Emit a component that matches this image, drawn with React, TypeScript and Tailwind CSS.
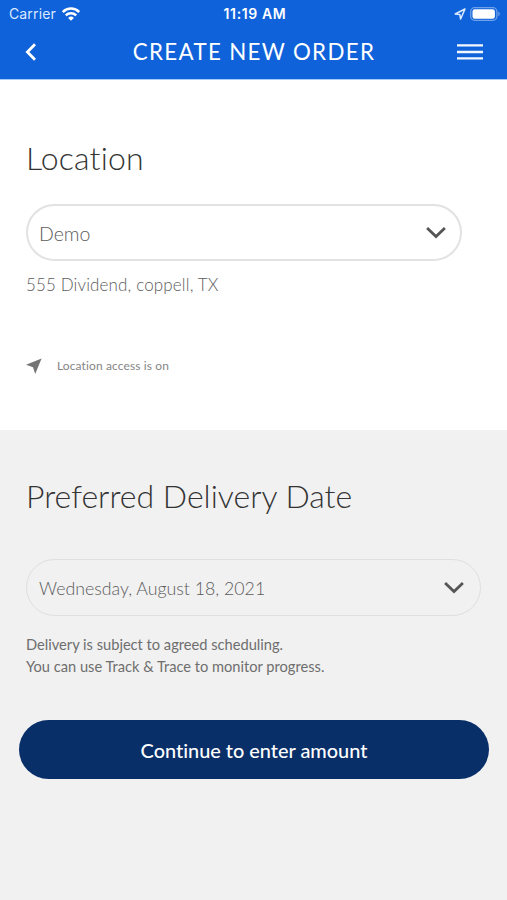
import * as React from 'react'

function WifiIcon() {
  return (
    <svg width="18" height="14" viewBox="0 0 18 14" fill="none" stroke="#fff" strokeWidth="2.5">
      <path d="M.8 5a11.6 11.6 0 0 1 16.4 0" />
      <path d="M3.8 8.4a7.4 7.4 0 0 1 10.4 0" />
      <path d="M9 13.8 6.1 10.9a4.1 4.1 0 0 1 5.8 0Z" fill="#fff" stroke="none" />
    </svg>
  )
}

function LocationOutlineIcon() {
  return (
    <svg width="12" height="12" viewBox="0 0 12 12" fill="none" stroke="#dcebff" strokeWidth="1.5" strokeLinejoin="round">
      <path d="M11 1 1.2 6l4.6.5.8 4.5Z" />
    </svg>
  )
}

function BatteryIcon() {
  return (
    <svg width="31" height="14" viewBox="0 0 31 14">
      <rect x="0.7" y="0.7" width="26.2" height="12.6" rx="4" fill="none" stroke="#6fa1ea" strokeWidth="1.3" />
      <rect x="2.5" y="2.3" width="22.4" height="9.4" rx="2.3" fill="#fff" />
      <path d="M28.3 4.8c2 .6 2 3.8 0 4.4Z" fill="#6fa1ea" />
    </svg>
  )
}

function BackIcon() {
  return (
    <svg width="12" height="18" viewBox="0 0 12 18" fill="none" stroke="#fff" strokeWidth="2.8">
      <path d="M10 1.2 2.4 9l7.6 7.8" />
    </svg>
  )
}

function MenuIcon() {
  return (
    <svg width="26" height="16" viewBox="0 0 26 16" fill="none" stroke="#f3f8ff" strokeWidth="2.4">
      <path d="M0 1.4h26M0 8h26M0 14.4h26" />
    </svg>
  )
}

function ArrowIcon() {
  return (
    <svg width="16" height="16" viewBox="0 0 16 16" fill="#757575">
      <path d="M15.6.4 0 6.8l7 2.4L9.2 16Z" />
    </svg>
  )
}

function ChevronIcon() {
  return (
    <svg width="20" height="12" viewBox="0 0 20 12" fill="none" stroke="#555" strokeWidth="2.8">
      <path d="m1.1 1.1 8.9 8.5 8.9-8.5" />
    </svg>
  )
}

function Header() {
  return (
    <header className="h-[80px] border-b border-[#a5cbf8] bg-[#0f62d9] text-white">
      <div className="grid h-[27px] grid-cols-3 items-center pr-[6px] pl-[9px] font-['Inter',sans-serif] text-[14px]">
        <div className="flex items-center gap-[6px]">
          <span className="w-[47px] tracking-[0.01em] whitespace-nowrap text-[#dbe9ff]">Carrier</span>
          <WifiIcon />
        </div>
        <span className="text-center font-semibold tracking-[0.045em] whitespace-nowrap">11:19 AM</span>
        <div className="flex items-center justify-end gap-1">
          <LocationOutlineIcon />
          <BatteryIcon />
        </div>
      </div>
      <div className="flex h-[50px] items-center justify-between pr-6 pl-[25px]">
        <button aria-label="Back" className="w-[26px]">
          <BackIcon />
        </button>
        <h1 className="pt-px text-[22.3px] leading-none tracking-[0.06em] whitespace-nowrap">CREATE NEW ORDER</h1>
        <button aria-label="Menu">
          <MenuIcon />
        </button>
      </div>
    </header>
  )
}

function Select({ className, children }: { className: string; children: React.ReactNode }) {
  return (
    <button className={`flex h-[57px] items-center justify-between rounded-full text-left text-[#5c5c5c] ${className}`}>
      {children}
      <ChevronIcon />
    </button>
  )
}

export default function App() {
  return (
    <div className="flex h-[900px] w-[507px] flex-col overflow-hidden bg-white font-['Lato',sans-serif] [font-variant-ligatures:none]">
      <Header />
      <section className="h-[350px] px-[26px] pt-[58px]">
        <h2 className="text-[32px] leading-10 font-light tracking-[0.005em] whitespace-nowrap text-[#333]">Location</h2>
        <Select className="mt-[26px] w-[436px] border-2 border-[#e2e2e2] pr-[14px] pl-[11px]">
          <span className="pt-[3px] text-[19.5px] font-light">Demo</span>
        </Select>
        <p className="mt-3 text-[17px] leading-6 font-light tracking-[0.008em] whitespace-nowrap text-[#5c5c5c]">
          555 Dividend, coppell, TX
        </p>
        <div className="mt-[59px] flex items-center gap-[15px]">
          <ArrowIcon />
          <span className="text-[12px] leading-5 tracking-[0.01em] whitespace-nowrap text-[#858585]">Location access is on</span>
        </div>
      </section>
      <section className="flex-1 bg-[#f1f1f1] px-[26px] pt-[46px]">
        <h2 className="text-[32px] leading-10 font-light whitespace-nowrap text-[#333]">Preferred Delivery Date</h2>
        <Select className="mt-[43px] w-[455px] border-[1.5px] border-[#dfdfdf] pr-[16px] pl-3">
          <span className="pt-0.5 text-[17.75px] font-light whitespace-nowrap">Wednesday, August 18, 2021</span>
        </Select>
        <p className="mt-[18px] text-[14.65px] leading-[22px] whitespace-nowrap text-[#6e6e6e]">
          Delivery is subject to agreed scheduling.
          <br />
          You can use Track &amp; Trace to monitor progress.
        </p>
        <button className="-mx-[7px] mt-[42px] h-[59px] w-[470px] rounded-full bg-[#092f69] pt-0.5 text-[19.9px] font-medium text-white">
          Continue to enter amount
        </button>
      </section>
    </div>
  )
}
